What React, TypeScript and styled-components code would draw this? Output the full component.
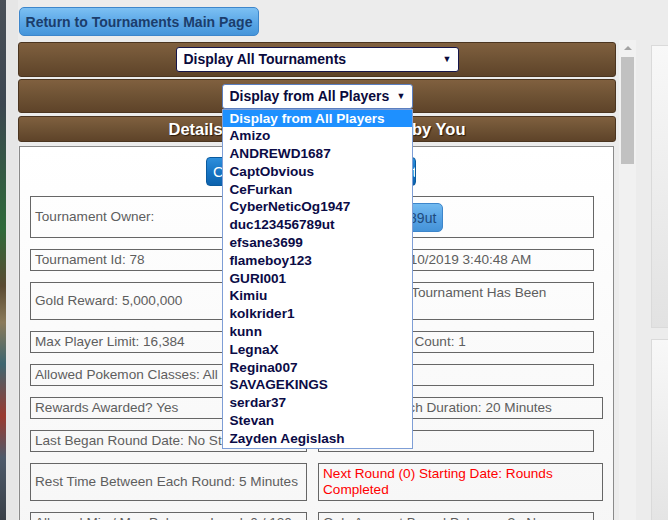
import styled, { createGlobalStyle } from "styled-components";

const players = [
  "Display from All Players",
  "Amizo",
  "ANDREWD1687",
  "CaptObvious",
  "CeFurkan",
  "CyberNeticOg1947",
  "duc123456789ut",
  "efsane3699",
  "flameboy123",
  "GURI001",
  "Kimiu",
  "kolkrider1",
  "kunn",
  "LegnaX",
  "Regina007",
  "SAVAGEKINGS",
  "serdar37",
  "Stevan",
  "Zayden Aegislash",
];

type Cell = { text: string; wide?: boolean; wrap?: boolean; red?: boolean };

const rows: Cell[][] = [
  [{ text: "Tournament Id: 78" }, { text: "Start Date: 11/10/2019 3:40:48 AM" }],
  [{ text: "Gold Reward: 5,000,000" }, { text: "Current State: Tournament Has Been Completed", wrap: true }],
  [{ text: "Max Player Limit: 16,384" }, { text: "Current Player Count: 1" }],
  [{ text: "Allowed Pokemon Classes: All" }, { text: "Round: 0" }],
  [{ text: "Rewards Awarded? Yes" }, { text: "Maximum Match Duration: 20 Minutes", wide: true }],
  [{ text: "Last Began Round Date: No Start" }, { text: "Rounds: 0" }],
  [
    { text: "Rest Time Between Each Round: 5 Minutes" },
    { text: "Next Round (0) Starting Date: Rounds Completed", wide: true, wrap: true, red: true },
  ],
  [{ text: "Allowed Min / Max Pokemon Level: 0 / 120" }, { text: "Only Account Bound Pokemon? : No" }],
];

export default function App() {
  return (
    <>
      <GlobalStyle />
      <Page>
        <LeftArt />
        <Gutter />
        <Main>
          <TopButton>Return to Tournaments Main Page</TopButton>

          <Bar $h={35}>
            <Select $w={283}>
              Display All Tournaments
              <Arrow>▼</Arrow>
            </Select>
          </Bar>

          <Bar $h={34} $gap={2}>
            <SelectWrap>
              <Select $w={191} $focused>
                Display from All Players
                <Arrow>▼</Arrow>
              </Select>
              <OptionList>
                {players.map((p, i) => (
                  <Option key={p} $active={i === 0}>
                    {p}
                  </Option>
                ))}
              </OptionList>
            </SelectWrap>
          </Bar>

          <Bar $h={26} $gap={3}>
            <BarTitle>Details of Tournament Created by You</BarTitle>
          </Bar>

          <Panel>
            <ActionRow>
              <ActionButton>Click Here To Join Tournament</ActionButton>
            </ActionRow>

            <FieldRow>
              <Field>Tournament Owner:</Field>
              <Field>
                <OwnerButton>duc123456789ut</OwnerButton>
              </Field>
            </FieldRow>

            {rows.map((r, i) => (
              <FieldRow key={i}>
                {r.map((c, j) => (
                  <Field key={j} $wide={c.wide} $wrap={c.wrap} $red={c.red}>
                    {c.text}
                  </Field>
                ))}
              </FieldRow>
            ))}
          </Panel>
        </Main>

        <Scrollbar>
          <ScrollArrow />
          <Thumb />
        </Scrollbar>

        <RightCol>
          <SidePanel $h={281} />
          <SidePanel $h={200} />
        </RightCol>
      </Page>
    </>
  );
}

const GlobalStyle = createGlobalStyle`
  html, body {
    margin: 0;
    padding: 0;
    background: #ececec;
  }
  body {
    font-family: "Liberation Sans", Arial, sans-serif;
  }
`;

const Page = styled.div`
  display: flex;
  align-items: flex-start;
  width: 668px;
  height: 520px;
  overflow: hidden;
  background: #ececec;
`;

const LeftArt = styled.div`
  align-self: stretch;
  width: 6px;
  flex-shrink: 0;
  background: linear-gradient(
    180deg,
    #4a5058 0%,
    #3c4650 20%,
    #2f6a3a 44%,
    #5a4a32 55%,
    #8a7a5a 62%,
    #3e6670 70%,
    #9a3a30 80%,
    #4e5a6a 88%,
    #3a4048 100%
  );
`;

const Gutter = styled.div`
  align-self: stretch;
  width: 12px;
  flex-shrink: 0;
  background: #e6e6e6;
`;

const Main = styled.div`
  width: 598px;
  flex-shrink: 0;
  padding-top: 7px;
  display: flex;
  flex-direction: column;
`;

const TopButton = styled.button`
  flex-shrink: 0;
  align-self: flex-start;
  margin: 0 0 6px 1px;
  width: 240px;
  height: 29px;
  padding: 0;
  border: 1px solid #3d86cb;
  border-radius: 5px;
  background: linear-gradient(180deg, #7cc0f3 0%, #5aa6e6 55%, #4595da 100%);
  color: #1b3d6c;
  font-family: "Liberation Sans", Arial, sans-serif;
  font-weight: bold;
  font-size: 14px;
`;

const Bar = styled.div<{ $h: number; $gap?: number }>`
  position: relative;
  flex-shrink: 0;
  height: ${(p) => p.$h}px;
  margin-top: ${(p) => p.$gap ?? 0}px;
  box-sizing: border-box;
  border: 1px solid #4b3520;
  border-radius: 3px;
  background: linear-gradient(180deg, #80603f 0%, #6e5234 50%, #5e4329 100%);
  display: flex;
  align-items: center;
  justify-content: center;
`;

const SelectWrap = styled.div`
  position: relative;
  z-index: 2;
`;

const Select = styled.div<{ $w: number; $focused?: boolean }>`
  position: relative;
  width: ${(p) => p.$w}px;
  height: 25px;
  box-sizing: border-box;
  border: 1px solid ${(p) => (p.$focused ? "#5b7fc0" : "#14144a")};
  border-radius: 3px;
  background: #fff;
  color: #0a0a3c;
  font-weight: bold;
  font-size: 14px;
  line-height: 23px;
  padding-left: 7px;
  white-space: nowrap;
`;

const Arrow = styled.span`
  position: absolute;
  right: 6px;
  top: 0;
  font-size: 9px;
  color: #0a0a3c;
`;

const OptionList = styled.div`
  position: absolute;
  left: 0;
  top: 100%;
  width: 191px;
  box-sizing: border-box;
  border: 1px solid #7e9ed6;
  background: #fff;
`;

const Option = styled.div<{ $active?: boolean }>`
  height: 17.8px;
  line-height: 17.8px;
  padding-left: 7px;
  font-weight: bold;
  font-size: 13.6px;
  white-space: nowrap;
  color: ${(p) => (p.$active ? "#fff" : "#0b0b46")};
  background: ${(p) => (p.$active ? "#1e90ff" : "#fff")};
`;

const BarTitle = styled.div`
  color: #fff;
  font-weight: bold;
  font-size: 16.5px;
  white-space: nowrap;
  text-shadow: 1px 1px 1px #2a1a0a;
`;

const Panel = styled.div`
  flex-shrink: 0;
  margin: 4px 0 0 1px;
  width: 595px;
  height: 400px;
  box-sizing: border-box;
  border: 1px solid #8a8a8a;
  border-bottom: none;
  background: linear-gradient(180deg, #ffffff 0%, #f6f6f6 100%);
  padding: 10px 10px 0;
`;

const ActionRow = styled.div`
  display: flex;
  justify-content: center;
  padding-right: 11px;
  margin-bottom: 10px;
`;

const ActionButton = styled.button`
  width: 210px;
  height: 29px;
  border: 1px solid #0a5a9e;
  border-radius: 4px;
  background: linear-gradient(180deg, #2e8fdc 0%, #1673c2 55%, #0c62ad 100%);
  color: #fff;
  font-family: "Liberation Sans", Arial, sans-serif;
  font-size: 15px;
  text-align: left;
  padding-left: 6px;
  white-space: nowrap;
  overflow: hidden;
`;

const FieldRow = styled.div`
  display: flex;
  align-items: stretch;
  gap: 11px;
  margin-bottom: 11px;
`;

const Field = styled.div<{ $wide?: boolean; $wrap?: boolean; $red?: boolean }>`
  box-sizing: border-box;
  width: ${(p) => (p.$wide ? 285 : 276)}px;
  flex-shrink: 0;
  &:first-child {
    width: 277px;
  }
  border: 1px solid #666;
  padding: 2px 4px;
  display: flex;
  align-items: center;
  font-size: 13.6px;
  line-height: 16px;
  color: ${(p) => (p.$red ? "#ff0000" : "#5e5e5e")};
  white-space: ${(p) => (p.$wrap ? "normal" : "nowrap")};
  overflow: hidden;
`;

const OwnerButton = styled.button`
  margin: 4px 0 3px 2px;
  height: 29px;
  padding: 0 6px;
  border: 1px solid #3d86cb;
  border-radius: 5px;
  background: linear-gradient(180deg, #72baf0 0%, #56a2e4 55%, #4593d8 100%);
  color: #1f4a7c;
  font-family: "Liberation Sans", Arial, sans-serif;
  font-size: 14px;
`;

const Scrollbar = styled.div`
  margin: 40px 0 0 3px;
  width: 17px;
  height: 480px;
  flex-shrink: 0;
  background: #f1f1f1;
  overflow: hidden;
`;

const ScrollArrow = styled.div`
  margin: 6px auto 0;
  width: 0;
  height: 0;
  border-left: 4px solid transparent;
  border-right: 4px solid transparent;
  border-bottom: 4px solid #a3a3a3;
`;

const Thumb = styled.div`
  margin: 7px 0 0 2px;
  width: 13px;
  height: 107px;
  background: #c1c1c1;
`;

const RightCol = styled.div`
  margin: 45px 0 0 15px;
  width: 40px;
  flex-shrink: 0;
  display: flex;
  flex-direction: column;
  gap: 11px;
`;

const SidePanel = styled.div<{ $h: number }>`
  height: ${(p) => p.$h}px;
  border: 1px solid #dadada;
  border-right: none;
  background: linear-gradient(180deg, #f8f8f8 0%, #e2e2e2 100%);
`;
